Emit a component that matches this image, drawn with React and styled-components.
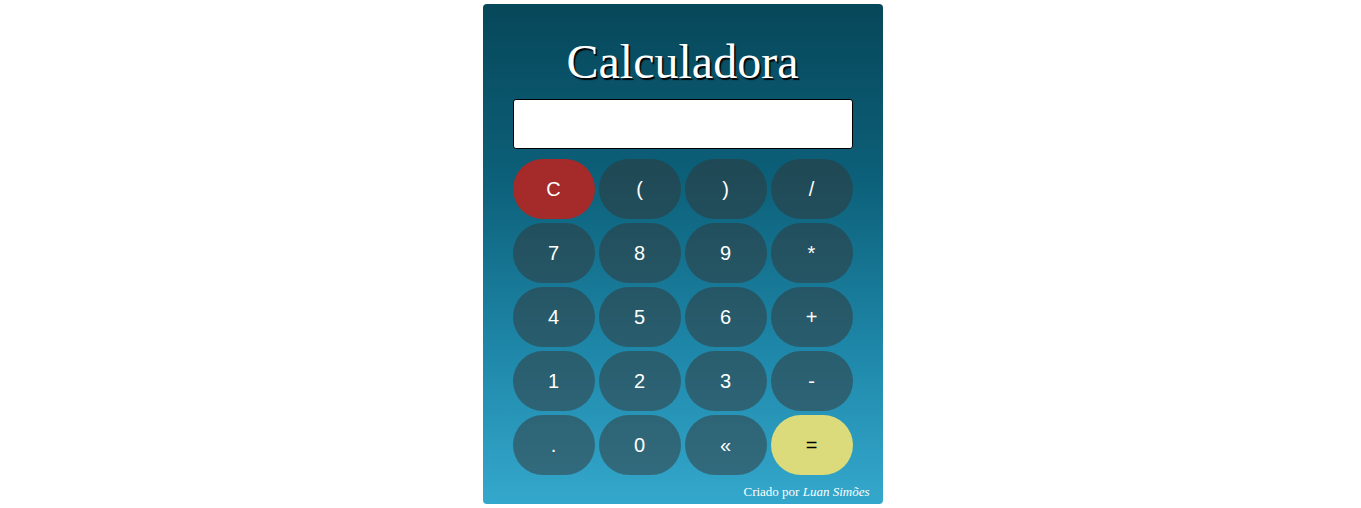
import React from "react";
import styled, { createGlobalStyle } from "styled-components";

const Global = createGlobalStyle`
  html, body { margin: 0; padding: 0; background: #fff; }
  * { box-sizing: border-box; }
`;

const Page = styled.div`
  display: flex;
  justify-content: center;
  padding: 4px 0 0 4px;
`;

const Card = styled.div`
  width: 400px;
  height: 500px;
  border-radius: 4px;
  background: linear-gradient(to bottom, #07475a 0%, #0c6079 35%, #1f88aa 70%, #34a8cc 100%);
  padding: 30px 30px 0;
  display: flex;
  flex-direction: column;
`;

const Title = styled.h1`
  margin: 0 0 10px;
  font-family: "Liberation Serif", "Times New Roman", serif;
  font-weight: normal;
  font-size: 48px;
  line-height: 55px;
  text-align: center;
  color: #fff;
  text-shadow: 1.5px 1.5px 1px #000;
`;

const Display = styled.input`
  width: 340px;
  height: 50px;
  border: 1px solid #000;
  border-radius: 3px;
  background: #fff;
  margin: 0 0 10px;
  padding: 0 8px;
  font-family: "Liberation Sans", Arial, sans-serif;
  font-size: 24px;
  outline: none;
`;

const Grid = styled.div`
  display: grid;
  grid-template-columns: repeat(4, 82px);
  grid-auto-rows: 60px;
  gap: 4px;
`;

const Key = styled.button`
  border: none;
  border-radius: 30px;
  font-family: "Liberation Sans", Arial, sans-serif;
  font-size: 20px;
  padding: 0;
  cursor: pointer;
  color: ${(p) => (p.$kind === "equals" ? "#000" : "#fff")};
  background: ${(p) =>
    p.$kind === "clear"
      ? "#a52a2a"
      : p.$kind === "equals"
      ? "#dcdb7b"
      : "rgba(51, 51, 51, 0.5)"};
`;

const Footer = styled.p`
  margin: 9px -17px 0 0;
  text-align: right;
  font-family: "Liberation Serif", "Times New Roman", serif;
  font-size: 13px;
  color: #fff;
  & em { font-style: italic; }
`;

const keys = [
  ["C", "clear"], ["("], [")"], ["/"],
  ["7"], ["8"], ["9"], ["*"],
  ["4"], ["5"], ["6"], ["+"],
  ["1"], ["2"], ["3"], ["-"],
  ["."], ["0"], ["«"], ["=", "equals"],
];

export default function App() {
  return (
    <>
      <Global />
      <Page>
        <Card>
          <Title>Calculadora</Title>
          <Display type="text" readOnly value="" />
          <Grid>
            {keys.map(([label, kind]) => (
              <Key key={label} $kind={kind}>{label}</Key>
            ))}
          </Grid>
          <Footer>
            Criado por <em>Luan Simões</em>
          </Footer>
        </Card>
      </Page>
    </>
  );
}
